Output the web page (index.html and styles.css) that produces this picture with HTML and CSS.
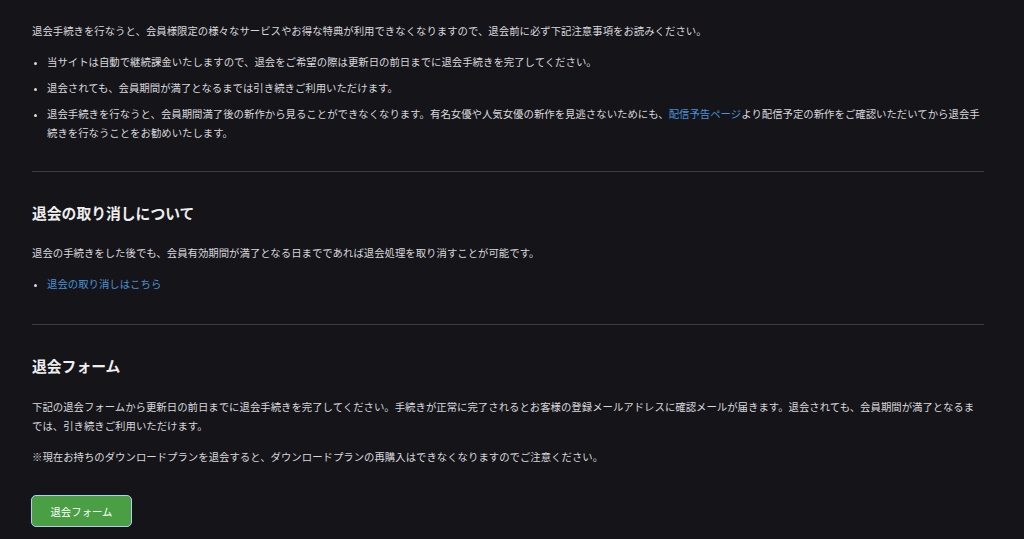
FILE: index.html
```html
<!DOCTYPE html>
<html lang="ja">
<head>
<meta charset="utf-8">
<title>退会</title>
<link rel="stylesheet" href="styles.css">
</head>
<body>
<main class="page">
  <section class="section first">
    <p class="text">退会手続きを行なうと、会員様限定の様々なサービスやお得な特典が利用できなくなりますので、退会前に必ず下記注意事項をお読みください。</p>
    <ul class="list">
      <li>当サイトは自動で継続課金いたしますので、退会をご希望の際は更新日の前日までに退会手続きを完了してください。</li>
      <li>退会されても、会員期間が満了となるまでは引き続きご利用いただけます。</li>
      <li>退会手続きを行なうと、会員期間満了後の新作から見ることができなくなります。有名女優や人気女優の新作を見逃さないためにも、<a class="link" href="#">配信予告ページ</a>より配信予定の新作をご確認いただいてから退会手続きを行なうことをお勧めいたします。</li>
    </ul>
  </section>
  <hr class="rule">
  <section class="section">
    <h2 class="heading">退会の取り消しについて</h2>
    <p class="text">退会の手続きをした後でも、会員有効期間が満了となる日までであれば退会処理を取り消すことが可能です。</p>
    <ul class="list">
      <li><a class="link" href="#">退会の取り消しはこちら</a></li>
    </ul>
  </section>
  <hr class="rule second">
  <section class="section form">
    <h2 class="heading">退会フォーム</h2>
    <p class="text">下記の退会フォームから更新日の前日までに退会手続きを完了してください。手続きが正常に完了されるとお客様の登録メールアドレスに確認メールが届きます。退会されても、会員期間が満了となるまでは、引き続きご利用いただけます。</p>
    <p class="text">※現在お持ちのダウンロードプランを退会すると、ダウンロードプランの再購入はできなくなりますのでご注意ください。</p>
    <button class="btn" type="button">退会フォーム</button>
  </section>
</main>
</body>
</html>
```
FILE: styles.css
```css
html, body {
  margin: 0;
  padding: 0;
  background: #141419;
}
body {
  font-family: "Noto Sans CJK JP", "Noto Sans", sans-serif;
  color: #d8d8dc;
  font-size: 10.4px;
  line-height: 19px;
}
.page {
  width: 952px;
  padding: 21px 0 0 32px;
}
.section {
  margin: 0;
}
.text {
  margin: 0 0 12px;
}
.list {
  margin: 0;
  padding: 0 0 0 15px;
}
.list li {
  margin: 0 0 7px;
}
.list li::marker {
  font-size: 9px;
}
.link {
  color: #4a92d6;
  text-decoration: none;
}
.rule {
  border: 0;
  border-top: 1px solid #3c3c42;
  margin: 29px 0 0;
  height: 0;
}
.rule.second {
  margin-top: 31px;
}
.heading {
  margin: 31px 0 20px;
  font-size: 14.8px;
  line-height: 20px;
  font-weight: 700;
  color: #eeeef0;
}
.form .heading {
  margin-bottom: 21px;
}
.btn {
  display: block;
  margin: 29px 0 0 -1px;
  width: 101px;
  height: 32px;
  background: #4a9e44;
  color: #ffffff;
  border: 1.5px solid #b4cdf0;
  border-radius: 5px;
  font-family: "Noto Sans CJK JP", "Noto Sans", sans-serif;
  font-size: 10.4px;
  padding: 0;
}
```
